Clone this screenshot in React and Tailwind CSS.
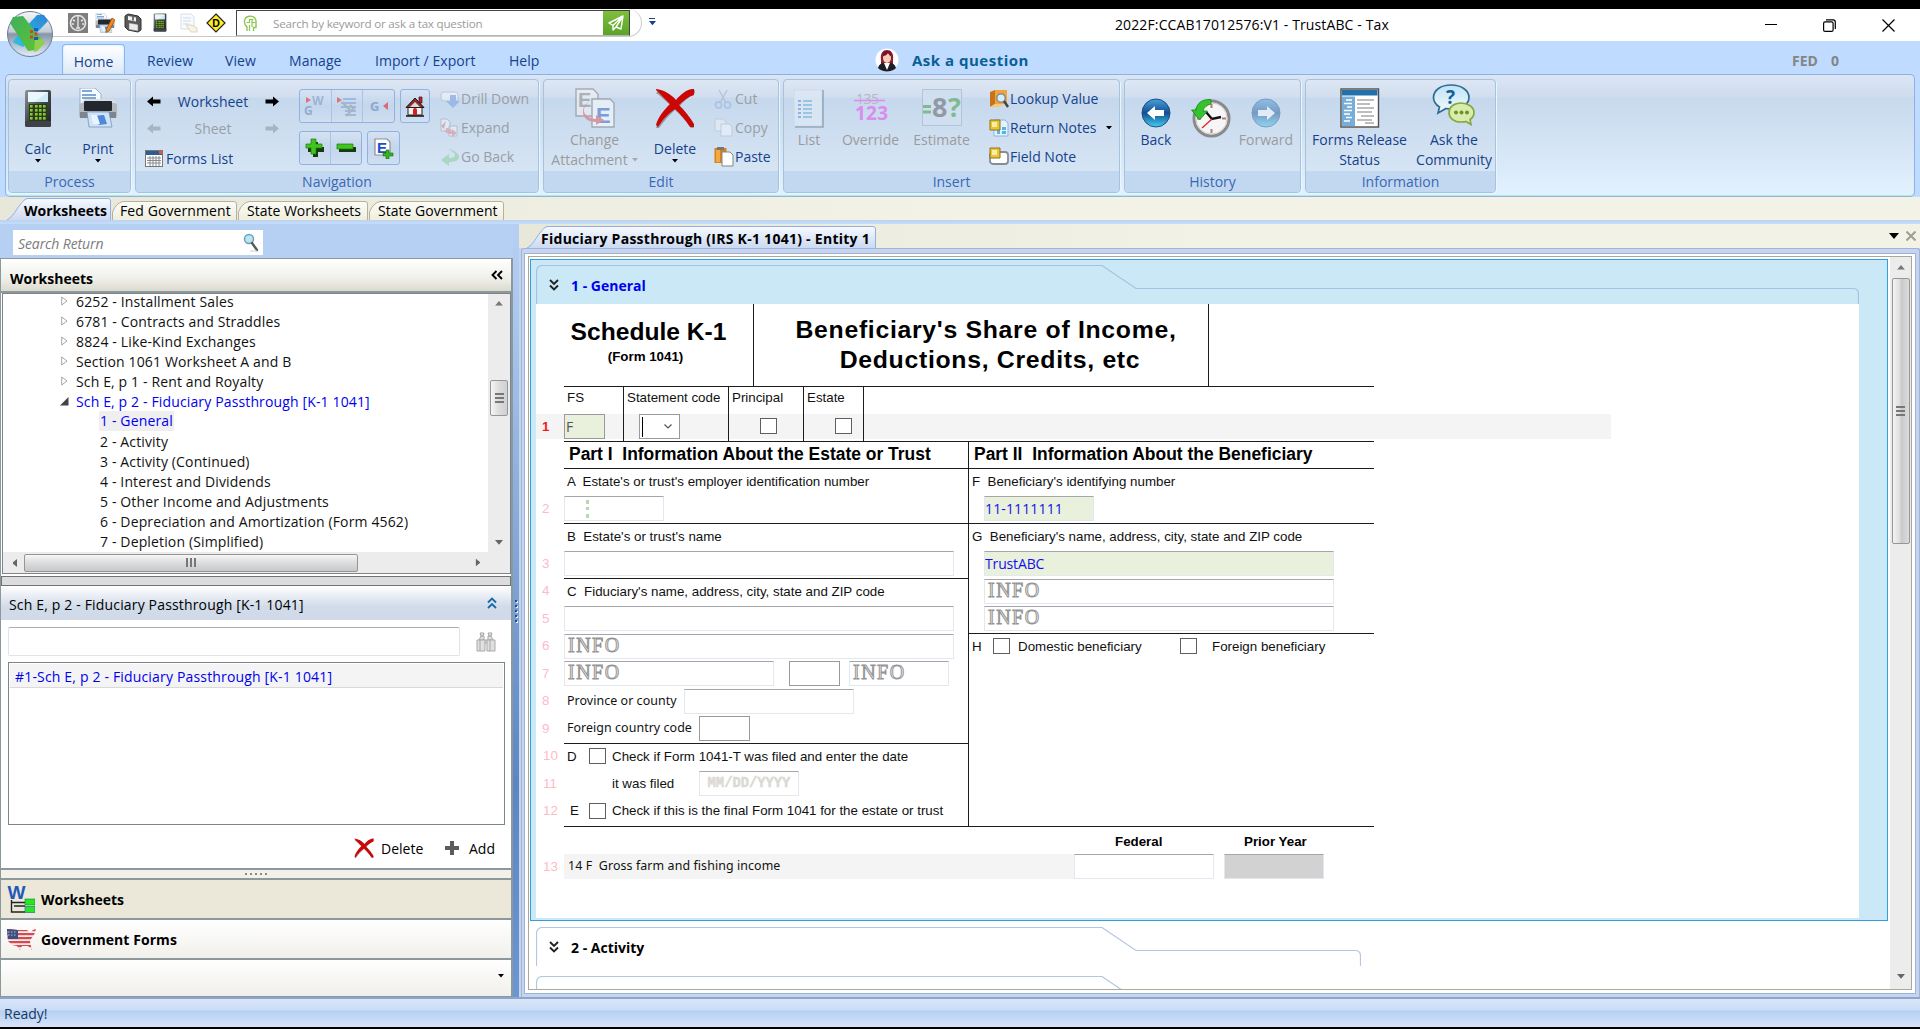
import React from "react";

const MENU = [
  ["Review", "w-[78px]"],
  ["View", "w-[64px]"],
  ["Manage", "w-[86px]"],
  ["Import / Export", "w-[134px]"],
  ["Help", "w-[366px]"],
];

const TREE = [
  ["6252 - Installment Sales", "closed"],
  ["6781 - Contracts and Straddles", "closed"],
  ["8824 - Like-Kind Exchanges", "closed"],
  ["Section 1061 Worksheet A and B", "closed"],
  ["Sch E, p 1 - Rent and Royalty", "closed"],
  ["Sch E, p 2 - Fiduciary Passthrough [K-1 1041]", "open"],
  ["1 - General", "selected"],
  ["2 - Activity", "leaf"],
  ["3 - Activity (Continued)", "leaf"],
  ["4 - Interest and Dividends", "leaf"],
  ["5 - Other Income and Adjustments", "leaf"],
  ["6 - Depreciation and Amortization (Form 4562)", "leaf"],
  ["7 - Depletion (Simplified)", "leaf"],
];

/* ---------- small glyphs ---------- */

const Down = ({ c = "#000", w = 6 }) => (
  <svg width={w} height={w * 0.6} viewBox="0 0 10 6"><path d="M0 0h10L5 6z" fill={c} /></svg>
);

const Arrow = ({ flip, c = "#000" }) => (
  <svg width="14" height="11" viewBox="0 0 14 11" className={flip ? "rotate-180" : ""}>
    <path d="M0 5.5 6 .5v3h7.5v4H6v3z" fill={c} />
  </svg>
);

const RedX = ({ s }) => (
  <svg width={s} height={s} viewBox="0 0 40 40">
    <path d="M3 3C10 5 16 9 21 14 26 8 32 3 40 2v3C33 9 28 14 24 19c6 6 11 13 15 21h-3C31 33 26 27 20 22 14 27 9 33 4 40H1C4 31 9 24 16 18 11 13 7 9 1 5z" fill="#555" opacity=".5" />
    <path d="M1 1C9 2 16 6 21 12 26 6 31 2 37 1h2v6c-6 2-11 6-15 10 6 6 11 12 15 19v3h-4C30 31 25 26 20 21 13 26 8 31 3 39l-2-2C3 29 9 22 15 16 10 11 6 7 1 2z" fill="#cc0505" />
  </svg>
);

const Orb = () => (
  <svg width="48" height="48" viewBox="0 0 48 48">
    <defs>
      <linearGradient id="orb" x1="0" y1="0" x2="0" y2="1"><stop offset="0" stopColor="#f4f7fa" /><stop offset=".45" stopColor="#c3ccd7" /><stop offset=".5" stopColor="#8795a9" /><stop offset="1" stopColor="#e3eefa" /></linearGradient>
      <linearGradient id="blu" x1="1" y1="0" x2="0" y2="1"><stop offset="0" stopColor="#2c86d8" /><stop offset="1" stopColor="#2cc3e2" /></linearGradient>
      <linearGradient id="grn" x1="0" y1="0" x2="1" y2="1"><stop offset="0" stopColor="#3fae5c" /><stop offset="1" stopColor="#5ec434" /></linearGradient>
    </defs>
    <circle cx="24" cy="24" r="22.500" fill="url(#orb)" stroke="#6c7c93" />
    <path d="M31 5h7l4 6-25 26-9-4q-2-1 0-3z" fill="url(#blu)" />
    <path d="M7 7l10-1 19 24-6 10-8 1L4 13z" fill="url(#grn)" />
    <path d="M29 30l7-1 3 4-8 8-3 1z" fill="#8fd04a" />
    <g fill="#d04436"><rect x="24" y="20" width="3" height="3" /><rect x="28.500" y="22.500" width="3" height="3" /><rect x="24" y="25.500" width="3" height="3" /></g>
    <path d="M28 18h4v3h-4zM28 27h4v3h-4z" fill="#1e58b8" />
  </svg>
);

const CalcIcon = ({ w, h }) => (
  <svg width={w} height={h} viewBox="0 0 28 39">
    <defs><linearGradient id="cl" x1="0" y1="0" x2="1" y2="1"><stop offset="0" stopColor="#8e9499" /><stop offset=".5" stopColor="#42474b" /><stop offset="1" stopColor="#1f2326" /></linearGradient></defs>
    <rect x="1" y="1" width="26" height="37" rx="2" fill="url(#cl)" />
    <rect x="4" y="3" width="20" height="10" fill="#cfeaf7" /><path d="M4 3h20L10 13H4z" fill="#eaf7fd" />
    <rect x="5" y="15" width="18" height="17" fill="#2b3a1c" />
    {[16, 20, 24, 28].map((y) => [6, 11, 15, 19].map((x) => <rect key={`${x}-${y}`} x={x} y={y} width="2.600" height="2.600" fill="#86c832" />))}
    <path d="M1 32h26v4a2 2 0 0 1-2 2H3a2 2 0 0 1-2-2z" fill="#3d4246" />
  </svg>
);

const PrinterIcon = ({ w, h, pen }) => (
  <svg width={w} height={h} viewBox="0 0 40 40">
    <path d="M2 0h15l6 6v12H2z" fill="#f7fbff" stroke="#8fb3d6" /><path d="M4 3h10M4 7h14M4 10h14" stroke="#5a8cc2" strokeWidth="1.5" />
    <path d="M3 15l4-4h28l4 4z" fill="#d9dde1" />
    <rect x="1" y="15" width="38" height="15" rx="3" fill="#b3b9bf" /><rect x="6" y="13" width="28" height="10" rx="1" fill="#23282e" /><rect x="2" y="24" width="36" height="6" fill="#7d858e" />
    <path d="M9 24h22l3 15H11z" fill="#cfe3f8" stroke="#6c8db0" strokeWidth=".7" /><path d="M14 28l12-1 3 9-8 1z" fill="#5088d8" /><path d="M13 27l6 0 3 9h-7z" fill="#e9f4ff" />
    {pen && <path d="M34 10l6 4-12 22-6 3 1-7z" fill="#f08a1c" stroke="#9a4d08" strokeWidth="1.500" />}
  </svg>
);

const GaugeIcon = () => (
  <svg width="20" height="20" viewBox="0 0 20 20"><rect width="20" height="20" fill="#7e7e7e" /><circle cx="10" cy="10" r="7.5" fill="none" stroke="#e5e5e5" strokeWidth="1.6" /><path d="M10 3v12M5 7l2 1M15 7l-2 1M4 11h2M14 11h2M8 15h4" stroke="#e5e5e5" strokeWidth="1.4" /></svg>
);
const FloppyIcon = () => (
  <svg width="18" height="20" viewBox="0 0 18 20"><path d="M1 3l3-2 10 2 3 3v11l-3 2-10-2-3-3z" fill="#5a5a5a" stroke="#333" /><path d="M4 3l8 1.500v4L4 7z" fill="#f3f3f3" /><path d="M5 10l9 1.500V18L5 16.500z" fill="#ededed" stroke="#777" strokeWidth=".5" /><path d="M9 4v3.500" stroke="#444" strokeWidth="1.5" /></svg>
);
const DocHandIcon = () => (
  <svg width="19" height="20" viewBox="0 0 19 20" opacity=".45"><path d="M2 1h10l3 3v12H2z" fill="#f2f8ff" stroke="#9fb8d4" /><path d="M4 5h8M4 8h8M4 11h6" stroke="#8fb3d6" /><path d="M7 12l5 0 6 3v4h-6z" fill="#f5e6c8" stroke="#b5a27c" /></svg>
);
const DiamondIcon = () => (
  <svg width="20" height="20" viewBox="0 0 20 20"><path d="M10 1l9 9-9 9-9-9z" fill="#ffee1f" stroke="#222" strokeWidth="1.2" /><text x="10" y="13.8" textAnchor="middle" className="font-['Liberation_Sans',sans-serif] text-[10.5px] font-bold">D</text></svg>
);
const HeadIcon = () => (
  <svg width="15" height="17" viewBox="0 0 15 17" fill="none" stroke="#8cc751" strokeWidth="1.4"><path d="M4 16v-4C.5 9 0 2 6.500 1.200c5-.4 7 2.800 6.500 6.800v4.500h-2.500V16" /><path d="M3.500 7.500h3V4.500h4M6.500 10V16M9 12V7.500h3.500M9 4.500v3" strokeWidth="1.200" /></svg>
);
const FormsListIcon = () => (
  <svg width="18" height="17" viewBox="0 0 18 17"><rect x=".5" y=".5" width="17" height="16" fill="#fff" stroke="#777" /><rect x="1" y="1" width="16" height="4" fill="#2f5d92" /><rect x="14" y="1" width="3" height="3" fill="#e05a3a" /><path d="M2 8h14M2 10.500h14M2 13h14M5 6v10M8 6v10M11 6v10M14 6v10" stroke="#8a8a8a" /></svg>
);
const GWIcon = () => (
  <svg width="24" height="26" viewBox="-1 -3 24 26" opacity=".6" className="font-['Open_Sans',sans-serif] text-[12px] font-bold"><path d="M2 1l5 3-5 3z" fill="#e53238" /><text x="8" y="9" fill="#7d9cc4">W</text><text x="0" y="19" fill="#6f8fb9">G</text></svg>
);
const LinesIcon = () => (
  <svg width="22" height="21" viewBox="0 0 22 21" opacity=".6"><path d="M1 1l5 3-5 3z" fill="#e53238" /><path d="M7 3h13M5 7h15M5 11h15M9 15h11M9 19h11" stroke="#7fa5d8" strokeWidth="2" /><path d="M6 6l8 8M14 9l4 3-4 4-4 4" stroke="#9b9b9b" strokeWidth="2" fill="none" /></svg>
);
const GLeftIcon = () => (
  <svg width="20" height="18" viewBox="-1 -3 20 18" opacity=".65" className="font-['Open_Sans',sans-serif] text-[13px] font-bold"><text x="0" y="11" fill="#6f8fb9">G</text><path d="M18 2v8l-5-4z" fill="#e53238" /></svg>
);
const HomeIcon = () => (
  <svg width="20" height="21" viewBox="0 0 20 21"><path d="M3 11h14v8H3z" fill="#f3f3f3" stroke="#222" /><path d="M14 1h3v6h-3z" fill="#c62020" stroke="#222" strokeWidth=".7" /><path d="M10 2l9 9.500H1z" fill="#8d2a2a" stroke="#1c1c1c" /><path d="M10 6l5 5H5z" fill="#d8d8d8" /><path d="M8 19v-5a2 2 0 0 1 4 0v5z" fill="#d81f1f" /><path d="M1 20h18" stroke="#111" strokeWidth="1.6" /></svg>
);
const PlusIcon = () => (
  <svg width="20" height="20" viewBox="0 0 20 20"><path d="M8 4h5v5h6v5h-6v5H8v-5H3V9h5z" fill="#173c0b" /><path d="M6 1h5v5h6v4h-6v6H6v-6H1V6h5z" fill="#3fc421" stroke="#1d7a0e" strokeWidth=".7" /></svg>
);
const MinusIcon = () => (
  <svg width="20" height="10" viewBox="0 0 20 10"><path d="M3 4h17v5H3z" fill="#173c0b" /><path d="M1 1h16v5H1z" fill="#3fc421" stroke="#1d7a0e" strokeWidth=".7" /></svg>
);
const EPlusIcon = () => (
  <svg width="20" height="21" viewBox="0 0 20 21"><path d="M1 1h12l3 3v13H1z" fill="#fff" stroke="#8b8f95" strokeWidth="1.2" /><text x="3" y="15" fill="#1d4fc4" className="font-['Liberation_Sans',sans-serif] text-[15px] font-bold">E</text><path d="M12 12h3v3h4v3h-4v3h-3v-3h-3v-3h3z" fill="#35b51c" stroke="#1d6a0e" strokeWidth=".6" /></svg>
);
const DrillIcon = () => (
  <svg width="20" height="18" viewBox="0 0 20 18" opacity=".55"><rect x="1" y="2" width="17" height="9" rx="3" fill="#f3f7fd" stroke="#a9b6c8" /><path d="M10 5h6v6h4l-7 7-7-7h4z" fill="#7a9fe0" /></svg>
);
const ExpandIcon = () => (
  <svg width="20" height="19" viewBox="0 0 20 19" opacity=".55"><path d="M1 1h6l3 3v9H1zM9 8h8v10H9z" fill="#eef3f9" stroke="#a0a8b4" /><path d="M6 3L1 8l5 5v-3c3 0 5 1 6 4v-3l5 4-5 4v-3c-4 0-7-1-8-5z" fill="#e08a92" /></svg>
);
const GoBackIcon = () => (
  <svg width="20" height="18" viewBox="0 0 20 18" opacity=".6"><path d="M8 1c7 1 11 5 11 8 0 4-5 5-10 5v4L1 12l8-6v4c4 0 6-1 6-3S12 3 8 1z" fill="#8fd0a0" /></svg>
);
const ChangeIcon = () => (
  <svg width="40" height="40" viewBox="0 0 40 40" opacity=".55" className="font-['Liberation_Sans',sans-serif] font-bold"><path d="M1 1h17l5 5v22H1z" fill="#f4f4f4" stroke="#808080" strokeWidth="1.4" /><text x="3" y="19" fill="#8e8e8e" className="text-[20px]">E</text><path d="M17 11h18l4 4v24H17z" fill="#fff" stroke="#808080" strokeWidth="1.4" /><text x="21" y="35" fill="#3f6bc4" className="text-[22px]">E</text><path d="M14 14c-5 4-7 9-3 13 3 3 7 4 10 4v-4l8 5-8 5v-3C13 34 8 30 8 24c0-5 2-8 6-10z" fill="#e0606a" /></svg>
);
const CutIcon = () => (
  <svg width="18" height="20" viewBox="0 0 18 20" opacity=".45" fill="none" stroke="#9aa4b2" strokeWidth="1.4"><path d="M5 1l7 13M13 1L6 14" /><circle cx="4.500" cy="16" r="3" stroke="#8fb0e2" strokeWidth="2" /><circle cx="13.500" cy="16" r="3" stroke="#8fb0e2" strokeWidth="2" /></svg>
);
const CopyIcon = () => (
  <svg width="19" height="19" viewBox="0 0 19 19" opacity=".5"><path d="M1 1h8l3 3v9H1z" fill="#eef3f9" stroke="#b3bcc8" /><path d="M7 6h8l3 3v9H7z" fill="#f5f9ff" stroke="#b3bcc8" /></svg>
);
const PasteIcon = () => (
  <svg width="20" height="20" viewBox="0 0 20 20"><rect x=".5" y="1" width="12" height="15" fill="#d9801d" /><rect x="2" y="3" width="4" height="12" fill="#f3a93e" /><rect x="3" y="0" width="7" height="3" fill="#777" /><path d="M8 5h8l3 3v11H8z" fill="#fff" stroke="#7f8791" /></svg>
);
const ListIcon = () => (
  <svg width="32" height="40" viewBox="0 0 32 40" opacity=".75"><path d="M1 2h28v36H1z" fill="#dfe9f5" stroke="#c9d8e8" /><path d="M30 2v37H2" fill="none" stroke="#8497ab" strokeWidth="1.600" /><path d="M5 13h3M5 17h3M5 21h3M5 25h3M5 29h3" stroke="#7aa7dc" strokeWidth="2" /><path d="M10 13h9M10 17h9M10 21h9M10 25h9M10 29h9" stroke="#89c0dc" strokeWidth="2" /></svg>
);
const OverrideIcon = () => (
  <svg width="36" height="40" viewBox="0 0 36 40" className="font-['Open_Sans',sans-serif]"><text x="3" y="16" fill="#b3b9c2" textLength="23" className="text-[14px]">135</text><path d="M1 12.500h31" stroke="#e08af2" strokeWidth="1.3" /><text x="2" y="32" fill="#dc8cf0" textLength="33" className="text-[19px] font-bold">123</text></svg>
);
const EstimateIcon = () => (
  <svg width="42" height="40" viewBox="0 0 42 40" className="font-['Open_Sans',sans-serif] font-bold"><rect x="1.500" y="1.500" width="39" height="36" fill="#cfdff0" stroke="#b4c4d6" /><path d="M2 18.500h8M2 24h8" stroke="#7fba92" strokeWidth="3" /><text x="11" y="29" fill="#9099a6" className="text-[27px]">8</text><text x="27" y="29" fill="#7fba92" className="text-[27px]">?</text></svg>
);
const LookupIcon = () => (
  <svg width="20" height="20" viewBox="0 0 20 20"><path d="M1 3l5-2v14l-5 3z" fill="#c8741a" /><path d="M6 1h12v14H6z" fill="#f2a33a" /><path d="M1 18l5-3h8l-3 3z" fill="#f6c878" /><circle cx="12" cy="9" r="4.200" fill="#d5eef9" stroke="#7e8c97" strokeWidth="1.400" /><path d="M15 12l4 6" stroke="#444" strokeWidth="2.400" /></svg>
);
const ReturnNotesIcon = () => (
  <svg width="20" height="20" viewBox="0 0 20 20"><path d="M5 2h11l3 3v13H5z" fill="#e3f3fd" stroke="#86b7dc" /><path d="M8 9h3v7H8zM13 9h4v3h-4zM13 13h4v3h-4z" fill="#58b2e4" /><path d="M1 2h10v10H1z" fill="#e9c43c" stroke="#8e7413" /><path d="M3 4h5v5H3z" fill="#fbeea0" /></svg>
);
const FieldNoteIcon = () => (
  <svg width="20" height="20" viewBox="0 0 20 20"><rect x="1" y="5" width="18" height="12" rx="3" fill="#fff" stroke="#868d96" strokeWidth="1.800" /><path d="M1 1h10v10H1z" fill="#e9c43c" stroke="#8e7413" /><path d="M3 3h5v5H3z" fill="#fbeea0" /></svg>
);
const RoundArrow = ({ flip }) => (
  <svg width="30" height="30" viewBox="0 0 30 30" className={flip ? "-scale-x-100 opacity-45" : ""}>
    <defs><linearGradient id="ra" x1="0" y1="0" x2="0" y2="1"><stop offset="0" stopColor="#4aa0dc" /><stop offset=".5" stopColor="#134f8f" /><stop offset="1" stopColor="#41d0f5" /></linearGradient></defs>
    <circle cx="15" cy="15" r="14" fill="url(#ra)" stroke="#1c4f83" /><path d="M6 15l8-7v4h9v6h-9v4z" fill="#fff" />
  </svg>
);
const ClockIcon = () => (
  <svg width="40" height="40" viewBox="0 0 40 40"><circle cx="20.500" cy="20.500" r="17.500" fill="#f6f6f6" stroke="#8a8a8a" strokeWidth="3" /><circle cx="20.500" cy="20.500" r="15.500" fill="none" stroke="#d0d0d0" /><path d="M20.500 6v4M20.500 31v4M31 20.500h4M6 20.500h4" stroke="#b87878" strokeWidth="2" /><path d="M15 14l6 7 9-2" fill="none" stroke="#111" strokeWidth="2.400" /><path d="M21 21l-10 9" stroke="#e02525" strokeWidth="1.300" /><path d="M20 1.500C11 1 6 5 5 12H.5l8 10 8-9H12c1-4 4-6 8-7z" fill="#35c22e" stroke="#148a10" strokeWidth=".8" /></svg>
);
const FormsReleaseIcon = () => (
  <svg width="40" height="40" viewBox="0 0 40 40"><rect x="1" y="1" width="37.500" height="38" fill="#fff" stroke="#4f4f4f" strokeWidth="1.400" /><rect x="2" y="2" width="35.500" height="5.500" fill="#2271ab" /><rect x="2" y="8.500" width="13" height="29.500" fill="#76add9" /><path d="M6 12h6M4 15.500h8M7 19h5M4 22.500h8M4 26h6M6 29.500h6M4 33h6" stroke="#fff" strokeWidth="1.400" /><path d="M17 12h17M17 16h13M17 20h17M17 24h15M21 28h13M17 32h15M25 35h9" stroke="#7d7d7d" strokeWidth="1.200" /></svg>
);
const AskIcon = () => (
  <svg width="44" height="44" viewBox="0 0 44 44"><defs><linearGradient id="bb" x1="0" y1="0" x2="0" y2="1"><stop offset="0" stopColor="#bfe3f6" /><stop offset="1" stopColor="#f4fbff" /></linearGradient></defs><path d="M19 1C9 1 1.500 6 1.500 13.500c0 4 2 7 6 9.500L6 29l8-4.500c13 2 23-3 23-11C37 6 29 1 19 1z" fill="url(#bb)" stroke="#2f6d93" strokeWidth="1.700" /><text x="14" y="20" fill="#115f98" className="font-['Open_Sans',sans-serif] text-[19px] font-bold">?</text><path d="M29 19c-7 0-12 4-12 9.500S22 38 29 38c2 0 4 0 5-.5l5 3-1-5c3-2 4-4 4-7 0-5.500-6-9.500-13-9.500z" fill="#d9ecae" stroke="#86a83e" strokeWidth="1.700" /><g fill="#6d9420"><circle cx="24" cy="28.500" r="2" /><circle cx="29.500" cy="28.500" r="2" /><circle cx="35" cy="28.500" r="2" /></g></svg>
);
const AgentIcon = () => (
  <svg width="24" height="24" viewBox="0 0 24 24"><circle cx="12" cy="12" r="11.500" fill="#fff" /><path d="M6 12C5 5 8 2 12 2s7 3 6 10v4H6z" fill="#8c1f35" /><ellipse cx="12" cy="10" rx="4" ry="5" fill="#f6cdb4" /><path d="M8 8c2 0 4-1 5-3 1 2 2 3 3 3 0-4-2-5-4-5S8 4 8 8z" fill="#6d1528" /><path d="M3 20c1-4 4-5 6-5l3 3 3-3c2 0 5 1 6 5-4 4.500-14 4.500-18 0z" fill="#1d1d24" /><path d="M9 15l3 7 3-7z" fill="#fff" /></svg>
);
const MagnifierIcon = () => (
  <svg width="16" height="20" viewBox="0 0 16 20"><circle cx="6" cy="6" r="4.500" fill="#b8e6f3" stroke="#6f9fb8" strokeWidth="1.500" /><path d="M9 10l5 7" stroke="#5b5b5b" strokeWidth="2.400" strokeLinecap="round" /><path d="M7 18h7" stroke="#d0d0d0" /></svg>
);
const BinocularsIcon = () => (
  <svg width="20" height="20" viewBox="0 0 20 20" fill="#e0e0e0" stroke="#a9a9a9"><path d="M4 1h4l-1 3h-2zM12 1h4l-1 3h-2zM5 4h3v4H3zM12 4h3l2 4h-5zM8 8h4v3H8z" /><path d="M1 8h8v11H1zM11 8h8v11h-8zM4 8v11M14 8v11" /></svg>
);
const DoubleChevron = ({ c = "#222", className = "" }) => (
  <svg width="10" height="12" viewBox="0 0 10 12" fill="none" stroke={c} strokeWidth="1.900" className={className}><path d="M1 1l4 4 4-4M1 6.500l4 4 4-4" /></svg>
);
const WorksheetsIcon = () => (
  <svg width="28" height="32" viewBox="0 -4 28 32"><text x="0.500" y="14" fill="#2458b8" textLength="18" lengthAdjust="spacingAndGlyphs" className="font-['Liberation_Sans',sans-serif] text-[19px] font-bold">W</text><path d="M4.500 15v12H18M4.500 17.500H18M7 21h11" fill="none" stroke="#222" strokeWidth="1.400" /><rect x="18" y="14" width="10" height="6" fill="#25e825" stroke="#157a2b" strokeWidth=".6" /><rect x="18" y="21.500" width="10" height="6" fill="#25e825" stroke="#1b57a8" strokeWidth=".6" /></svg>
);
const UsaIcon = () => (
  <svg width="30" height="23" viewBox="0 0 30 23"><defs><clipPath id="usa"><path d="M1 1l11 1 9 0 3 3 3-3 3-1-2 6-3 4-1 3 2 8-4-4-6 0-2 4-3-4-5-1-4-4z" /></clipPath></defs><g clipPath="url(#usa)"><rect width="30" height="23" fill="#f6e8e8" />{[1, 5, 9, 13, 17, 21].map((y) => <rect key={y} x="0" y={y} width="30" height="2.200" fill="#d44a52" />)}<rect width="12" height="11" fill="#3d4f80" /><path d="M2 4h9M2 7h9" stroke="#b9c2dc" strokeDasharray="1.500 1.500" /></g></svg>
);

/* ---------- ribbon pieces ---------- */

function Group({ title, width, children }) {
  return (
    <section className={`${width} flex flex-none flex-col overflow-hidden rounded-[4px] border border-[#a5c3dc] bg-[linear-gradient(180deg,#dde7f4_0,#d2deef_17px,#c6d8ed_18px,#d6e5f4_92px)] shadow-[1px_1px_0_#eaf5fd]`}>
      <div className="flex h-[91px] flex-none">{children}</div>
      <div className="flex h-[21px] items-center justify-center bg-[#c1d8f0] text-[14px] text-[#3a67b5]">{title}</div>
    </section>
  );
}

function Big({ icon, lines, arrow, width, off, drop }) {
  const color = off ? "text-[#9b9b9b]" : "text-[#15428b]";
  return (
    <div className={`${width} ${color} flex flex-none flex-col items-center pt-[8px] text-[14px] leading-5`}>
      <div className="flex h-[40px] items-end justify-center">{icon}</div>
      <div className={drop ? "mt-[11px]" : "mt-[2px]"}>
        {lines.map((l, i) => <div key={i} className="h-5 whitespace-nowrap text-center">{l}</div>)}
      </div>
      {arrow && <div className="flex justify-center"><Down /></div>}
    </div>
  );
}

function SmallCol({ rows, className }) {
  return (
    <div className={`${className} flex flex-none flex-col pt-[4px] text-[14px]`}>
      {rows.map(([icon, label, off, arrow]) => (
        <div key={label} className={`flex h-[29px] items-center whitespace-nowrap ${off ? "text-[#9a9ea4]" : "text-[#15428b]"}`}>
          <span className="flex w-[21px] flex-none justify-start">{icon}</span>
          {label}
          {arrow && <span className="ml-[9px]"><Down /></span>}
        </div>
      ))}
    </div>
  );
}

const boxed = "flex items-center rounded-[3px] border border-[#8fb2e2] bg-[linear-gradient(180deg,#d5e2f2,#c3d6ec_50%,#cfdff1)]";

function Ribbon() {
  return (
    <div className="ml-[5px] mr-[5px] flex h-[123px] flex-none gap-[5px] rounded-[5px] border border-[#8eb1e4] border-b-[#9fb0cc] bg-[linear-gradient(180deg,#dbe5f4_0,#cfdcee_22px,#c7d9ec_24px,#e3f1ff_100%)] pl-[2px] pt-[4px] shadow-[inset_0_-1px_0_#a9ecf4]">
      <div className="flex h-[114px] gap-[4px]">
        <Group title="Process" width="w-[123px]">
          <Big width="w-[58px]" drop arrow lines={["Calc"]} icon={<CalcIcon w="28" h="39" />} />
          <Big width="w-[62px]" drop arrow lines={["Print"]} icon={<PrinterIcon w="40" h="40" />} />
        </Group>
        <Group title="Navigation" width="w-[404px]">
          <div className="ml-[9px] flex w-[154px] flex-none flex-col pt-[8px] text-[14px] text-[#15428b]">
            <div className="flex h-[29px] w-[134px] items-center justify-between pl-[2px]"><Arrow />Worksheet<Arrow flip /></div>
            <div className="flex h-[31px] w-[134px] items-center justify-between pl-[2px] text-[#9a9ea4]"><Arrow c="#a9b4c2" />Sheet<Arrow flip c="#a9b4c2" /></div>
            <div className="flex h-[30px] items-center gap-[3px] pt-[2px]"><FormsListIcon />Forms List</div>
          </div>
          <div className="flex w-[141px] flex-none flex-col gap-[8px] pt-[9px]">
            <div className="flex gap-[5px]">
              <div className={`${boxed} h-[34px] w-[96px] divide-x divide-[#a9c3e6]`}>
                <span className="flex h-full flex-1 items-center justify-center"><GWIcon /></span>
                <span className="flex h-full flex-1 items-center justify-center"><LinesIcon /></span>
                <span className="flex h-full flex-1 items-center justify-center"><GLeftIcon /></span>
              </div>
              <div className={`${boxed} h-[34px] w-[30px] justify-center`}><HomeIcon /></div>
            </div>
            <div className="flex gap-[5px]">
              <div className={`${boxed} h-[34px] w-[63px] divide-x divide-[#a9c3e6]`}>
                <span className="flex h-full flex-1 items-center justify-center"><PlusIcon /></span>
                <span className="flex h-full flex-1 items-center justify-center"><MinusIcon /></span>
              </div>
              <div className={`${boxed} h-[34px] w-[33px] justify-center`}><EPlusIcon /></div>
            </div>
          </div>
          <SmallCol className="w-[94px]" rows={[[<DrillIcon />, "Drill Down", true], [<ExpandIcon />, "Expand", true], [<GoBackIcon />, "Go Back", true]]} />
        </Group>
        <Group title="Edit" width="w-[236px]">
          <Big width="w-[101px]" off lines={["Change", <span className="flex items-center gap-[4px]" key="a">Attachment<Down c="#a9a9a9" /></span>]} icon={<ChangeIcon />} />
          <Big width="w-[60px]" drop arrow lines={["Delete"]} icon={<RedX s="40" />} />
          <SmallCol className="ml-[9px] w-[62px]" rows={[[<CutIcon />, "Cut", true], [<CopyIcon />, "Copy", true], [<PasteIcon />, "Paste"]]} />
        </Group>
        <Group title="Insert" width="w-[337px]">
          <Big width="w-[50px]" off lines={["List"]} icon={<ListIcon />} />
          <Big width="w-[73px]" off lines={["Override"]} icon={<OverrideIcon />} />
          <Big width="w-[69px]" off lines={["Estimate"]} icon={<EstimateIcon />} />
          <SmallCol className="ml-[13px] w-[128px]" rows={[[<LookupIcon />, "Lookup Value"], [<ReturnNotesIcon />, "Return Notes", false, true], [<FieldNoteIcon />, "Field Note"]]} />
        </Group>
        <Group title="History" width="w-[177px]">
          <Big width="w-[62px]" lines={["Back"]} icon={<RoundArrow />} />
          <div className="flex w-[48px] flex-none justify-center pt-[18px]"><ClockIcon /></div>
          <Big width="w-[62px]" off lines={["Forward"]} icon={<RoundArrow flip />} />
        </Group>
        <Group title="Information" width="w-[191px]">
          <Big width="w-[107px]" lines={["Forms Release", "Status"]} icon={<FormsReleaseIcon />} />
          <Big width="w-[82px]" lines={["Ask the", "Community"]} icon={<AskIcon />} />
        </Group>
      </div>
    </div>
  );
}

/* ---------- top area ---------- */

function TitleBar() {
  return (
    <div className="flex h-[32px] flex-none bg-white">
      <div className="ml-[50px] flex h-[28px] w-[592px] items-center rounded-tl-[2px] rounded-tr-[14px] rounded-br-[14px] border-b border-r border-[#c9c9c9] pl-[18px]">
        <GaugeIcon />
        <span className="ml-[7px] flex w-[20px]"><PrinterIcon w="20" h="20" pen /></span>
        <span className="ml-[9px] flex w-[18px]"><FloppyIcon /></span>
        <span className="ml-[11px] flex w-[14px]"><CalcIcon w="14" h="19" /></span>
        <span className="ml-[12px] flex w-[19px]"><DocHandIcon /></span>
        <span className="ml-[8px] flex w-[20px]"><DiamondIcon /></span>
        <div className="ml-[10px] mt-[1px] flex h-[26px] w-[394px] items-center border border-[#444] border-b-[#b5b5b5] pl-[6px]">
          <HeadIcon />
          <span className="ml-[15px] flex-1 pt-[2px] text-[11.6px] leading-none tracking-[-0.2px] text-[#9b9b9b]">Search by keyword or ask a tax question</span>
          <span className="flex h-[24px] w-[26px] items-center justify-center bg-[linear-gradient(180deg,#7fbf3c,#5aa32a)]">
            <svg width="16" height="16" viewBox="0 0 16 16" fill="none" stroke="#fff" strokeWidth="1.400" strokeLinejoin="round"><path d="M15 1L1 8l4 2.500L15 1 8 12l5 2zM5 10.500V15l3-3" /></svg>
          </span>
        </div>
      </div>
      <div className="flex w-[20px] flex-col items-center justify-center gap-[2px] pb-[6px]"><span className="h-[1px] w-[6px] bg-[#15428b]" /><Down c="#15428b" w={7} /></div>
      <div className="flex flex-1 items-center pb-[1px] pl-[453px] text-[14px] tracking-[0.12px]">2022F:CCAB17012576:V1 - TrustABC - Tax</div>
      <div className="flex w-[155px] flex-none items-center justify-between pr-[25px]">
        <svg width="12" height="12" viewBox="0 0 12 12"><path d="M0 5.500h12" stroke="#000" /></svg>
        <svg width="13" height="13" viewBox="0 0 13 13" fill="none" stroke="#000" strokeWidth="1.200"><rect x=".6" y="2.900" width="9.500" height="9.500" rx="1.500" /><path d="M3 .8h7a2.300 2.300 0 0 1 2.300 2.300V10" /></svg>
        <svg width="13" height="13" viewBox="0 0 13 13"><path d="M.5.5l12 12M12.500.5l-12 12" stroke="#000" strokeWidth="1.200" /></svg>
      </div>
    </div>
  );
}

function MenuRow() {
  return (
    <div className="flex h-[33px] flex-none items-end text-[14px] text-[#15428b]">
      <div className="ml-[62px] flex h-[30px] w-[63px] items-center justify-center rounded-t-[4px] border border-b-0 border-[#8fb4ea] bg-[linear-gradient(180deg,#ffffff,#eaf2fc_60%,#dde8f5)] pt-[3px] shadow-[inset_0_0_2px_#a6e6ff]">Home</div>
      <div className="ml-[22px] flex h-[28px] flex-1 items-center">
        {MENU.map(([label, w]) => <span key={label} className={`${w} tracking-[0.05px]`}>{label}</span>)}
        <span className="flex w-[37px]"><AgentIcon /></span>
        <span className="text-[15px] font-bold tracking-[0.5px] text-[#0a5f95]">Ask a question</span>
        <span className="ml-auto mr-[81px] flex gap-[13px] text-[14px] font-bold text-[#858585]"><span>FED</span><span>0</span></span>
      </div>
    </div>
  );
}

function SlantTab({ label, w, width, active, pad }) {
  return (
    <div className={`${width} relative flex h-full flex-none items-center`}>
      <svg width={w} height="22" viewBox={`0 0 ${w} 22`} className="absolute bottom-0 left-0">
        <defs>
          <linearGradient id="ta" x1="0" y1="0" x2="0" y2="1"><stop offset="0" stopColor="#f7faff" /><stop offset="1" stopColor="#cbd9f2" /></linearGradient>
          <linearGradient id="ti" x1="0" y1="0" x2="0" y2="1"><stop offset="0" stopColor="#fcfcf8" /><stop offset="1" stopColor="#eeeede" /></linearGradient>
        </defs>
        {active
          ? <path d={`M0 22 C8 18 12 4 20 .5 H${w - 3} Q${w - .5} .5 ${w - .5} 3 V22`} fill="url(#ta)" stroke="#8fb0e0" />
          : <path d={`M.5 22 V14 Q4 5 11 3.500 H${w - 3} Q${w - .5} 3.500 ${w - .5} 6 V22`} fill="url(#ti)" stroke="#b5b19c" />}
      </svg>
      <span className={`${pad} relative whitespace-nowrap pt-[5px] text-[14px] leading-[16px] ${active ? "font-bold" : ""}`}>{label}</span>
    </div>
  );
}

/* ---------- left panel ---------- */

const Grip = ({ vertical }) => (
  <span className={`flex gap-[2px] ${vertical ? "flex-row" : "flex-col"}`}>
    {[0, 1, 2].map((i) => <span key={i} className={vertical ? "h-[9px] w-[2px] bg-[#777]" : "h-[2px] w-[9px] bg-[#777]"} />)}
  </span>
);

function LeftPanel() {
  return (
    <aside className="flex w-[519px] flex-none bg-[linear-gradient(180deg,#b5d0f2_0,#a9c6ec_100px,#5c86c3_560px,#6c95d6_100%)]">
      <div className="flex w-[513px] flex-none flex-col">
        <div className="flex h-[34px] flex-none items-start bg-[#b5d0f2] pl-[13px] pt-[6px]">
          <div className="flex h-[25px] w-[250px] items-center justify-between bg-white pl-[5px] pr-[4px]">
            <span className="pt-[1px] text-[14px] italic tracking-[-0.1px] text-[#7c7c7c]">Search Return</span>
            <MagnifierIcon />
          </div>
        </div>
        <div className="flex flex-1 flex-col border-l border-r-2 border-t border-[#8b999c] bg-white">
          <div className="flex h-[32px] flex-none items-center justify-between bg-[linear-gradient(180deg,#ffffff,#f0f0ea_60%,#dcdad0)] pl-[9px] pr-[9px] text-[14px] font-bold">
            <span className="pt-[8px] leading-none">Worksheets</span>
            <DoubleChevron className="rotate-90" c="#000" />
          </div>
          <div className="h-[2px] flex-none bg-[#8b999c]" />
          <div className="ml-[1px] flex h-[281px] flex-none flex-col border border-[#7f8489]">
            <div className="flex h-[258px] overflow-hidden">
              <div className="-mt-[3px] flex-1 text-[14px] tracking-[0.14px]">
                {TREE.map(([label, kind]) => (
                  <div key={label} className={`flex h-5 items-center whitespace-nowrap ${kind === "closed" || kind === "open" ? "pl-[58px]" : "pl-[96px]"} ${kind === "open" || kind === "selected" ? "text-[#0000f0]" : "text-[#111]"}`}>
                    {kind === "closed" && <svg width="7" height="10" viewBox="0 0 7 10" className="mr-[7px]"><path d="M.7 1v8L6 5z" fill="none" stroke="#a6a6a6" /></svg>}
                    {kind === "open" && <svg width="9" height="9" viewBox="0 0 9 9" className="-ml-[1px] mr-[6px]"><path d="M8.500 0v8.500H0z" fill="#444" /></svg>}
                    <span className={kind === "selected" ? "h-5 bg-[#efefef] px-[1px] leading-5" : "px-[1px]"}>{label}</span>
                  </div>
                ))}
              </div>
              <div className="flex w-[22px] flex-none flex-col items-center bg-[#ececec] py-[7px]">
                <span className="rotate-180"><Down c="#777" w={8} /></span>
                <div className="mt-[74px] flex h-[36px] w-[18px] items-center justify-center rounded-[2px] border border-[#969696] bg-[linear-gradient(90deg,#f6f6f6,#dcdcdc_50%,#cfd0d2)]"><Grip /></div>
                <span className="mt-auto"><Down c="#666" w={8} /></span>
              </div>
            </div>
            <div className="flex h-[21px] flex-none items-center bg-[#ececec]">
              <span className="ml-[8px] flex h-[8px] w-[8px] rotate-90 items-center"><Down c="#666" w={8} /></span>
              <div className="ml-[5px] flex h-[18px] w-[334px] items-center justify-center rounded-[2px] border border-[#969696] bg-[linear-gradient(180deg,#f6f6f6,#dcdcdc_50%,#c6c8ca)]"><Grip vertical /></div>
              <span className="ml-auto mr-[28px] -rotate-90"><Down c="#666" w={8} /></span>
            </div>
          </div>
          <div className="mt-[2px] h-[10px] flex-none border border-[#6f7478] bg-[#dcdcdc]" />
          <div className="flex h-[34px] flex-none items-center justify-between bg-[linear-gradient(180deg,#ffffff,#d2dbe9_60%,#cfd9e8)] pl-[8px] pr-[14px] text-[14px] tracking-[0.16px]">
            <span className="pt-[3px]">Sch E, p 2 - Fiduciary Passthrough [K-1 1041]</span>
            <DoubleChevron className="rotate-180" c="#1a6aa8" />
          </div>
          <div className="mt-[7px] flex h-[29px] flex-none items-center pl-[7px]">
            <div className="h-[29px] w-[452px] rounded-[2px] border border-[#e0e3ea] border-t-[#a9adb4]" />
            <span className="ml-[16px]"><BinocularsIcon /></span>
          </div>
          <div className="ml-[7px] mt-[6px] h-[163px] w-[497px] flex-none border border-[#7f8489] p-px">
            <div className="flex h-[24px] items-center border-b border-[#d9d9d9] bg-[#f4f4f4] pl-[5px] pt-[2px] text-[14px] tracking-[0.17px] text-[#0000f0]">#1-Sch E, p 2 - Fiduciary Passthrough [K-1 1041]</div>
          </div>
          <div className="flex h-[43px] flex-none items-center pl-[353px] pt-[3px] text-[14px]">
            <RedX s="20" /><span className="ml-[7px] w-[64px]">Delete</span>
            <svg width="14" height="14" viewBox="0 0 14 14"><path d="M5 0h4v5h5v4H9v5H5V9H0V5h5z" fill="#5c5c5c" /></svg>
            <span className="ml-[10px]">Add</span>
          </div>
          <div className="flex h-[12px] flex-none items-center justify-center gap-[3px] border-y-2 border-[#8b999c] bg-[#f4f1ea]">
            {[0, 1, 2, 3, 4].map((i) => <span key={i} className="h-[2px] w-[2px] bg-[#8a8a8a]" />)}
          </div>
          <div className="flex h-[40px] flex-none items-center border-b-2 border-[#8b999c] bg-[#ebe8d9] pl-[6px] text-[14px] font-bold"><span className="w-[34px] pb-[4px]"><WorksheetsIcon /></span>Worksheets</div>
          <div className="flex h-[40px] flex-none items-center border-b-2 border-[#8b999c] bg-[linear-gradient(180deg,#ffffff,#f1f0eb)] pl-[5px] text-[14px] font-bold tracking-[0.06px]"><span className="w-[35px]"><UsaIcon /></span>Government Forms</div>
          <div className="flex flex-1 items-center justify-end border-b border-[#8b999c] bg-[linear-gradient(180deg,#ffffff,#f0efea)] pb-[4px] pr-[7px]"><Down w={6} /></div>
        </div>
      </div>
      <div className="flex w-[6px] flex-col items-center justify-center gap-[3px]">
        {[0, 1, 2, 3, 4].map((i) => <span key={i} className="h-[2px] w-[2px] bg-[#1d4f96] shadow-[1px_1px_0_#e6f0ff]" />)}
      </div>
    </aside>
  );
}

/* ---------- form ---------- */

const line = "border-[#1c1c1c]";
const arial = "font-['Liberation_Sans',sans-serif]";

const Box = ({ w, className = "", children }) => (
  <span className={`${w} ${className} flex h-[25px] flex-none items-center overflow-hidden border border-[#e3e7ef] border-t-[#a5a5ab]`}>{children}</span>
);
const DarkBox = ({ w, className = "", children }) => (
  <span className={`${w} ${className} flex h-[25px] flex-none items-center border border-[#9a9a9a]`}>{children}</span>
);
const Info = () => (
  <span className="pb-[3px] pl-[3px] font-['Liberation_Serif',serif] text-[20px] leading-none tracking-[1.5px] text-[#e2e2e2] [-webkit-text-stroke:0.9px_#939393]">INFO</span>
);
const Check = ({ className = "" }) => <span className={`${className} h-[16px] w-[17px] flex-none border border-[#5f5f5f] bg-white`} />;
const Row = ({ children, first, className = "" }) => <div className={`flex flex-none whitespace-pre ${first ? "h-[27px]" : "h-[27.5px]"} ${className}`}>{children}</div>;
const Lab = ({ children, className = "" }) => <span className={`${className} flex h-[25px] flex-none items-center`}>{children}</span>;
const HeadCell = ({ children, w }) => <span className={`${w} ${line} flex h-full flex-none items-center border-r pb-[5px] pl-[3px]`}>{children}</span>;

const NUMS = ["", "", "2", "", "3", "4", "5", "6", "7", "8", "9", "10", "11", "12"];

function FormBody() {
  return (
    <div className={`${arial} flex flex-1 flex-col bg-white text-[13.33px] text-[#111]`}>
      <div className={`ml-[28px] flex h-[83px] w-[810px] flex-none border-b ${line} font-bold text-black`}>
        <div className={`flex w-[190px] flex-col items-center border-r pr-[20px] pt-[14px] ${line}`}>
          <div className="whitespace-nowrap text-[24.6px] leading-[28px]">Schedule K-1</div>
          <div className="ml-[-6px] text-[13.33px] leading-[22px]">(Form 1041)</div>
        </div>
        <div className={`flex w-[455px] flex-col items-center border-r pl-[10px] pt-[11px] ${line} whitespace-nowrap text-[24.8px] leading-[30px] tracking-[0.7px]`}>
          <div>Beneficiary's Share of Income,</div>
          <div className="pl-[8px]">Deductions, Credits, etc</div>
        </div>
      </div>
      <div className="flex h-[27px] flex-none pl-[28px]">
        <HeadCell w="w-[60px]">FS</HeadCell>
        <HeadCell w="w-[105px]">Statement code</HeadCell>
        <HeadCell w="w-[75px]">Principal</HeadCell>
        <HeadCell w="w-[60px]">Estate</HeadCell>
      </div>
      <div className="flex h-[28px] flex-none">
        <div className="flex h-[25px] w-[28px] items-center bg-[#f4f4f4] pl-[6px] font-bold text-[#f81818]">1</div>
        <div className={`flex w-[810px] border-b ${line} bg-[linear-gradient(180deg,#f4f4f4_25px,#fff_25px)]`}>
          <div className={`w-[60px] border-r ${line}`}><DarkBox w="w-[41px]" className="bg-[#e9f0dc] pl-[1px] font-['Open_Sans'] text-[14px] text-[#555]">F</DarkBox></div>
          <div className={`w-[105px] border-r pl-[15px] ${line}`}>
            <DarkBox w="w-[41px]" className="justify-between bg-white pl-[2px] pr-[7px]"><span className="h-[20px] w-[1px] bg-black" /><svg width="8" height="5" viewBox="0 0 8 5"><path d="M.5.5L4 4 7.500.5" fill="none" stroke="#555" strokeWidth="1.200" /></svg></DarkBox>
          </div>
          <div className={`flex w-[75px] border-r pl-[31px] pt-[4px] ${line}`}><Check /></div>
          <div className={`flex w-[60px] border-r pl-[31px] pt-[4px] ${line}`}><Check /></div>
        </div>
        <div className="h-[25px] w-[237px] bg-[#f4f4f4]" />
      </div>
      <div className="flex flex-none">
        <div className="-mt-[1px] h-[384px] w-[28px] flex-none text-[#ffbac6]">
          {NUMS.map((n, i) => <Row key={i} className={n.length > 1 ? "pl-[7px]" : "pl-[6px]"}><Lab>{n}</Lab></Row>)}
        </div>
        <div className={`flex w-[405px] flex-none flex-col border-r ${line}`}>
          <Row first className={`border-b ${line}`}><Lab className="pl-[5px] text-[17.450px] font-bold text-black">Part I  Information About the Estate or Trust</Lab></Row>
          <div className={`h-[55px] border-b ${line}`}>
            <Row first><Lab className="pl-[3px]">A  Estate's or trust's employer identification number</Lab></Row>
            <Row><Box w="w-[100px]" className="pl-[21px]"><span className="h-[18px] border-l-[3px] border-dotted border-[#b5d8b0]" /></Box></Row>
          </div>
          <div className={`h-[55px] border-b ${line}`}>
            <Row first><Lab className="pl-[3px]">B  Estate's or trust's name</Lab></Row>
            <Row><Box w="w-[390px]" /></Row>
          </div>
          <div className={`h-[165px] border-b ${line}`}>
            <Row first><Lab className="pl-[3px]">C  Fiduciary's name, address, city, state and ZIP code</Lab></Row>
            <Row><Box w="w-[390px]" /></Row>
            <Row><Box w="w-[390px]"><Info /></Box></Row>
            <Row><Box w="w-[210px]"><Info /></Box><DarkBox w="w-[51px]" className="ml-[15px]" /><Box w="w-[100px]" className="ml-[9px]"><Info /></Box></Row>
            <Row><Lab className="w-[120px] pl-[3px] font-['Noto_Sans',sans-serif] text-[12.450px] tracking-[0.05px]">Province or county</Lab><Box w="w-[170px]" /></Row>
            <Row><Lab className="w-[135px] pl-[3px] font-['Noto_Sans',sans-serif] text-[12.450px] tracking-[0.05px]">Foreign country code</Lab><DarkBox w="w-[51px]" /></Row>
          </div>
          <div className={`h-[83px] border-b ${line}`}>
            <Row first><Lab className="w-[25px] pl-[3px]">D</Lab><Check className="mt-[4px]" /><Lab className="ml-[6px]">Check if Form 1041-T was filed and enter the date</Lab></Row>
            <Row><Lab className="w-[135px] pl-[48px]">it was filed</Lab><Box w="w-[100px]" className="justify-center"><span className="pt-[2px] font-['Liberation_Mono',monospace] text-[13.800px] font-bold text-[#dcd9d4] [-webkit-text-stroke:0.5px_#dcd9d4]">MM/DD/YYYY</span></Box></Row>
            <Row><Lab className="w-[25px] pl-[6px]">E</Lab><Check className="mt-[4px]" /><Lab className="ml-[6px]">Check if this is the final Form 1041 for the estate or trust</Lab></Row>
          </div>
        </div>
        <div className={`flex w-[405px] flex-none flex-col border-b ${line}`}>
          <Row first className={`border-b ${line}`}><Lab className="pl-[5px] text-[17.450px] font-bold text-black">Part II  Information About the Beneficiary</Lab></Row>
          <div className={`h-[55px] border-b ${line}`}>
            <Row first><Lab className="pl-[3px]">F  Beneficiary's identifying number</Lab></Row>
            <Row><Box w="w-[110px]" className="ml-[15px] bg-[#e9f0dc] font-['Open_Sans'] text-[14px] tracking-[0.14px] text-[#1111f0]">11-1111111</Box></Row>
          </div>
          <div className={`h-[110px] border-b ${line}`}>
            <Row first><Lab className="pl-[3px]">G  Beneficiary's name, address, city, state and ZIP code</Lab></Row>
            <Row><Box w="w-[350px]" className="ml-[15px] bg-[#e9f0dc] font-['Open_Sans'] text-[14px] tracking-[-0.15px] text-[#1111f0]">TrustABC</Box></Row>
            <Row><Box w="w-[350px]" className="ml-[15px]"><Info /></Box></Row>
            <Row><Box w="w-[350px]" className="ml-[15px]"><Info /></Box></Row>
          </div>
          <Row><Lab className="w-[24px] pl-[3px]">H</Lab><Check className="mt-[4px]" /><Lab className="ml-[8px] w-[162px]">Domestic beneficiary</Lab><Check className="mt-[4px]" /><Lab className="ml-[15px]">Foreign beneficiary</Lab></Row>
        </div>
      </div>
      <div className="flex h-[27px] flex-none items-center pl-[579px] pt-[3px] font-bold text-black"><span className="w-[129px]">Federal</span><span>Prior Year</span></div>
      <div className="flex h-[25px] flex-none">
        <span className="flex w-[28px] items-center pl-[7px] text-[#ffbac6]">13</span>
        <span className="flex w-[510px] items-center whitespace-pre bg-[#f4f4f4] pl-[4px] font-['Noto_Sans',sans-serif] text-[12.400px] tracking-[0.1px]">14 F  Gross farm and fishing income</span>
        <Box w="w-[140px]" className="bg-white" />
        <Box w="w-[100px]" className="ml-[10px] bg-[#d2d2d2]" />
      </div>
    </div>
  );
}

function SectionHead({ title, w, color, height, stroke }) {
  return (
    <div className={`relative flex ${height} flex-none items-start`}>
      <svg width={w + 1} height="39" viewBox={`0 0 ${w + 1} 39`} fill="none" stroke={stroke} className="absolute left-0 top-0">
        <path d={`M.5 39V7Q.5 .5 7 .5H566L600 23.500H${w - 5}Q${w + .5} 23.500 ${w + .5} 29V39`} strokeWidth="1.200" />
      </svg>
      {title && <div className={`relative flex h-[40px] items-center pl-[13px] text-[14px] font-bold ${color}`}><DoubleChevron /><span className="ml-[12px]">{title}</span></div>}
    </div>
  );
}

function Document() {
  return (
    <main className="flex flex-1 flex-col bg-[#c8d3ec]">
      <div className="flex h-[24px] flex-none items-center justify-between bg-[linear-gradient(90deg,#e7e7da,#f2f2e6_50%)] pl-[8px]">
        <SlantTab active label="Fiduciary Passthrough (IRS K-1 1041) - Entity 1" w={349} width="w-[349px]" pad="pl-[14px] tracking-[0.27px]" />
        <div className="flex items-center gap-[7px] pr-[4px]"><Down w={10} /><svg width="10" height="10" viewBox="0 0 10 10"><path d="M.5.5l9 9M9.500.5l-9 9" stroke="#a09d92" strokeWidth="2" /></svg></div>
      </div>
      <div className="ml-[2px] flex flex-1 flex-col rounded-t-[3px] border border-b-0 border-[#9db4dc] bg-[#c8d3ec] pb-[3px] pl-[2px] pr-[3px] pt-[4px]">
        <div className="flex flex-1 border border-[#99b3dd] bg-white py-[2px] pl-[3px] pr-[3px]">
          <div className="flex h-[734px] flex-1 border border-[#aca899]">
            <div className="flex flex-1 flex-col overflow-hidden pl-[1px] pt-[2px]">
              <div className="flex h-[662px] w-[1358px] flex-none flex-col border border-[#2fa0df] bg-[#cbe8f6] pb-[2px] pl-[5px] pr-[28px] pt-[5px]">
                <SectionHead title="1 - General" w={1322} color="text-[#0000f0]" height="h-[39px]" stroke="#a9c0e2" />
                <FormBody />
              </div>
              <div className="ml-[6px] mt-[6px] flex flex-col">
                <SectionHead title="2 - Activity" w={824} color="text-black" height="h-[49px]" stroke="#b3c6e2" />
                <SectionHead w={824} height="h-[49px]" stroke="#b3c6e2" />
              </div>
            </div>
            <div className="flex w-[21px] flex-none flex-col items-center bg-[#ececec] pb-[10px] pt-[8px]">
              <span className="rotate-180"><Down c="#777" w={8} /></span>
              <div className="mt-[8px] flex h-[266px] w-[18px] items-center justify-center rounded-[2px] border border-[#969696] bg-[linear-gradient(90deg,#f4f4f4,#dcdcdc_45%,#c6c8ca_50%,#dadcde)]"><Grip /></div>
              <span className="mt-auto"><Down c="#666" w={8} /></span>
            </div>
          </div>
        </div>
      </div>
    </main>
  );
}

export default function App() {
  return (
    <div className="relative flex h-[1029px] w-[1920px] flex-col overflow-hidden border-b-2 border-t-[9px] border-black bg-[#bfdbff] font-['Open_Sans',sans-serif] text-black">
      <TitleBar />
      <MenuRow />
      <Ribbon />
      <div className="flex h-[25px] flex-none items-end border-b-2 border-[#c3d3ea] bg-[linear-gradient(90deg,#e7e7da,#f2f2e6_50%)] pl-[7px]">
        <SlantTab active label="Worksheets" w={104} width="w-[105px]" pad="pl-[17px]" />
        <SlantTab label="Fed Government" w={125} width="w-[126px]" pad="pl-[8px] tracking-[0.1px]" />
        <SlantTab label="State Worksheets" w={130} width="w-[131px]" pad="pl-[9px]" />
        <SlantTab label="State Government" w={135} width="w-[135px]" pad="pl-[9px] tracking-[0.03px]" />
      </div>
      <div className="mt-[2px] flex h-[773px] flex-none">
        <LeftPanel />
        <Document />
      </div>
      <div className="flex flex-1 items-center border-t-2 border-[#8ba5cc] bg-[linear-gradient(180deg,#dae6f9_0,#c9dcf6_11px,#b6d0f5_12px,#d6e4f9_100%)] pl-[4px] text-[14px] text-[#15385f]">Ready!</div>
      <div className="absolute left-[6px] top-[1px]"><Orb /></div>
    </div>
  );
}
